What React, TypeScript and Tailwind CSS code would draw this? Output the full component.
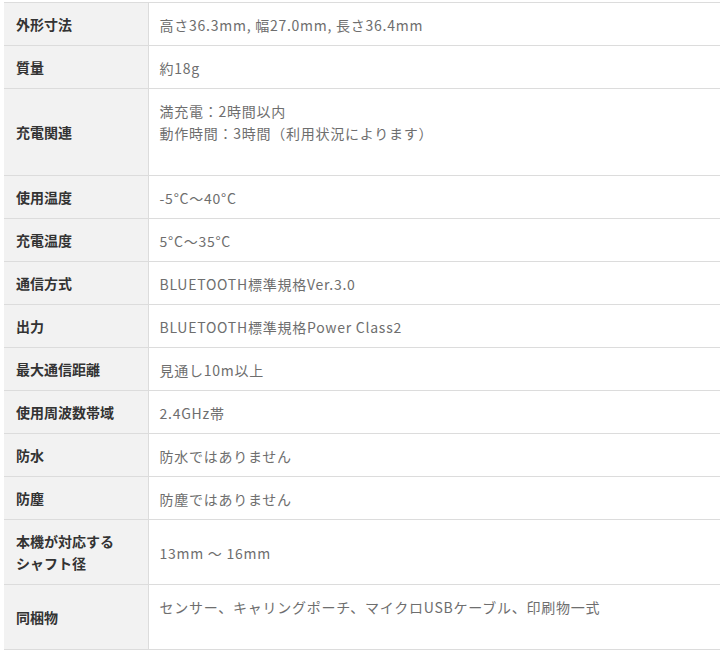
const rows: { label: string[]; value: string[] }[] = [
  { label: ["外形寸法"], value: ["高さ36.3mm, 幅27.0mm, 長さ36.4mm"] },
  { label: ["質量"], value: ["約18g"] },
  { label: ["充電関連"], value: ["満充電：2時間以内", "動作時間：3時間（利用状況によります）", ""] },
  { label: ["使用温度"], value: ["-5°C～40°C"] },
  { label: ["充電温度"], value: ["5°C～35°C"] },
  { label: ["通信方式"], value: ["BLUETOOTH標準規格Ver.3.0"] },
  { label: ["出力"], value: ["BLUETOOTH標準規格Power Class2"] },
  { label: ["最大通信距離"], value: ["見通し10m以上"] },
  { label: ["使用周波数帯域"], value: ["2.4GHz帯"] },
  { label: ["防水"], value: ["防水ではありません"] },
  { label: ["防塵"], value: ["防塵ではありません"] },
  { label: ["本機が対応する", "シャフト径"], value: ["13mm ～ 16mm"] },
  { label: ["同梱物"], value: ["センサー、キャリングポーチ、マイクロUSBケーブル、印刷物一式", ""] },
];

export default function App() {
  return (
    <div className="min-h-[652px] bg-white pt-[2px] pl-[4px]" style={{ fontFamily: '"Noto Sans CJK JP", "Noto Sans", sans-serif' }}>
      <table className="w-[716px] border-collapse text-[14px] leading-[22px]">
        <tbody>
          {rows.map((row) => (
            <tr key={row.label.join("")} className="border-y border-[#dcdcdc]">
              <th className="w-[144px] border-r border-[#dcdcdc] bg-[#f2f2f2] py-[10px] pl-[12px] text-left align-middle font-bold text-[#333333]">
                {row.label.map((l) => (
                  <div key={l}>{l}</div>
                ))}
              </th>
              <td className="pl-[11px] pt-[11px] pb-[9px] align-middle font-normal tracking-[0.75px] text-[#6e6e6e]">
                {row.value.map((v, i) => (
                  <div key={i} className="h-[22px]">{v}</div>
                ))}
              </td>
            </tr>
          ))}
        </tbody>
      </table>
    </div>
  );
}
